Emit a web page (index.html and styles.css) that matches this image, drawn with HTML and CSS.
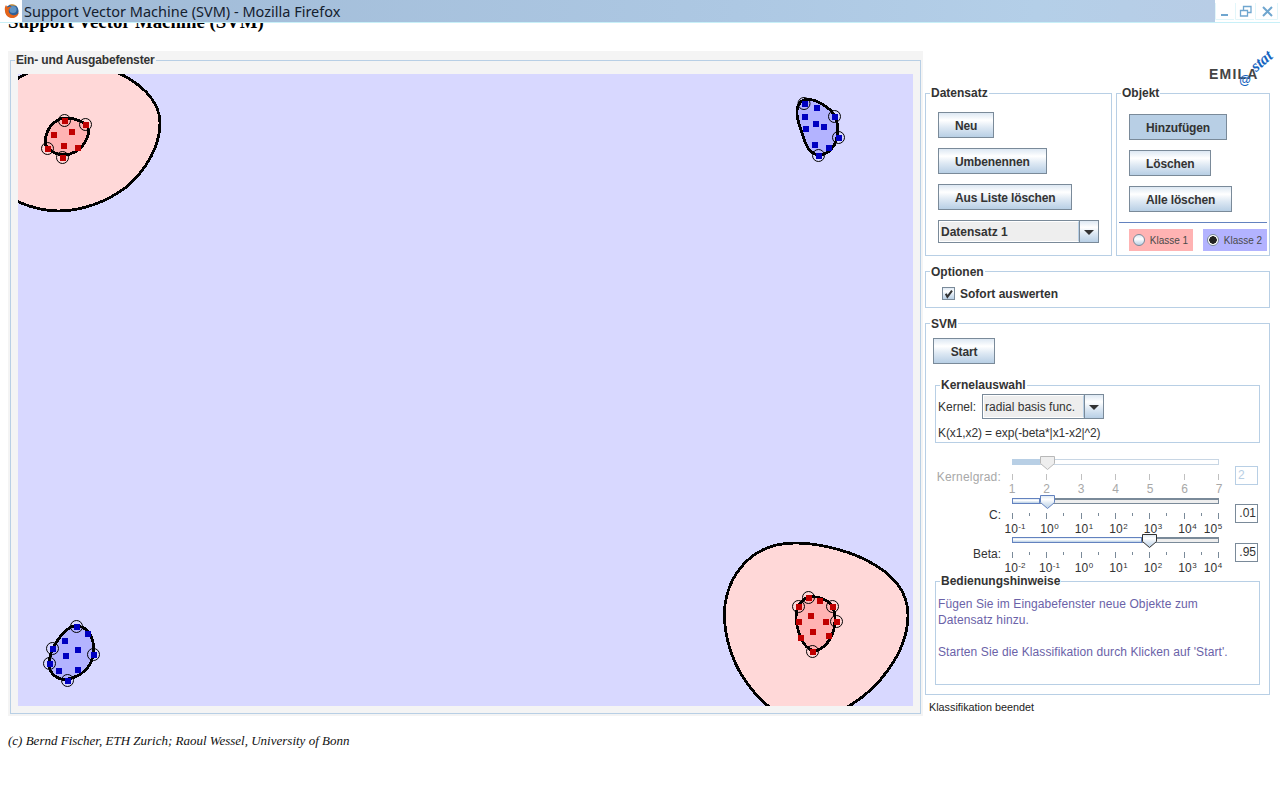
FILE: index.html
```html
<!DOCTYPE html>
<html lang="de">
<head>
    <meta charset="UTF-8">
    <title>Support Vector Machine (SVM) - Mozilla Firefox</title>
    <link rel="stylesheet" href="styles.css">
</head>
<body>

<!-- Browser title bar, lies over the heading -->
<div class="titlebar">
    <svg class="ff-icon" width="22" height="22" viewBox="0 0 22 22">
        <circle cx="12" cy="11" r="6.6" fill="#2f5f96"/>
        <circle cx="13" cy="9.5" r="3.6" fill="#5f93c4"/>
        <path d="M6 5 C4.6 7 4.6 9 5 11 C5.4 15.4 8.6 18 12.4 18 C16 18 18.6 15.4 18.8 12 C17.4 14.6 14.8 15.6 12.4 15 C9.6 14.4 8.2 12 8.8 9.8 C9.2 8.4 10.2 7.6 11.4 7.2 C10 6.4 8.6 6.6 7.6 7.4 C7 6.8 6.4 6 6 5 Z" fill="#e5641a"/>
        <path d="M9 4.8 C11.4 3.6 15 4 17 6.2 C15.4 5.4 13.6 5.2 12 5.8 C11 5.4 10 5 9 4.8 Z" fill="#f0a030"/>
    </svg>
    <div class="titlebar-text">Support Vector Machine (SVM) - Mozilla Firefox</div>
    <div class="win-controls">
        <svg width="64" height="22" viewBox="0 0 64 22" fill="none" stroke="#6fa6cf">
            <path d="M6 15 H13" stroke-width="2"/>
            <path d="M25.5 10.5 H32.5 V16 H25.5 Z M28.5 10 V6.5 H36 V12.5 H33" stroke-width="1.3"/>
            <path d="M48 7 L57 16 M57 7 L48 16" stroke-width="2"/>
            <path d="M.5 3 V19.5 H19 M20.5 3 V19.5 H39 M40.5 3 V19.5 H62.5 V3" stroke="#e2f6fa" stroke-width="1"/>
        </svg>
    </div>
</div>

<h1 class="page-title">Support Vector Machine (SVM)</h1>

<div class="applet">

    <!-- Plot -->
    <div class="left-panel">
        <div class="box plot-box">
            <div class="box-title plot-title">Ein- und Ausgabefenster</div>
            <svg class="plot" width="895" height="632" viewBox="18 74 895 632">
                <rect x="18" y="74" width="895" height="632" fill="#d8d8ff"/>

                <g fill="#ffd8d8" stroke="#000" stroke-width="2.8">
                    <path d="M112 70 C140 82 160 100 160 123 C160 145 147 170 125 188 C105 203 80 211 58 211 C42 211 28 207 10 198 L10 84 C16 79 24 74 36 70 Z"/>
                    <path d="M776 712 C752 695 728 665 724.5 620 C722 585 745 543 795 543 C835 543 908 565 908 615 C908 650 880 692 838 712 Z"/>
                </g>

                <g stroke="#000" stroke-width="2.8">
                    <path fill="#ffb3b3" d="M47 133 C50 124 58 118 66 118 C74 118 86 122 88 128 C90 136 84 147 75 152 C68 156 57 156 50 150 C44 146 44 140 47 133 Z"/>
                    <path fill="#ffb3b3" d="M796 618 C796 608 801 598 811 596.7 C820 596 829 601 832 606 C836 613 836 625 833 632 C830 642 823 649 815 651 C808 650 803 644 800 636 C798 630 796 624 796 618 Z"/>
                    <path fill="#b3b3ff" d="M797 110 C798 102 803 99 810 99.5 C820 101 831 109 835 116 C838 122 838 132 836.5 140 C834 148 828 154 820 155 C813 155 808 150 805 142 C802 132 796 120 797 110 Z"/>
                    <path fill="#b3b3ff" d="M49 664 C49 652 59 634 71 627 C79 624 86 628 90 634 C95 643 95 655 90 664 C85 673 74 679 65 679.5 C56 679 49 673 49 664 Z"/>
                </g>

                <!-- class 1 objects -->
                <g class="points" fill="#c00000">
                    <rect x="62" y="118" width="5" height="5"/><rect x="83" y="122" width="5" height="5"/>
                    <rect x="69" y="129" width="5" height="5"/><rect x="51" y="132" width="5" height="5"/>
                    <rect x="61" y="143" width="5" height="5"/><rect x="75" y="145" width="5" height="5"/>
                    <rect x="45" y="146" width="5" height="5"/><rect x="60" y="155" width="5" height="5"/>

                    <rect x="806" y="595" width="5" height="5"/><rect x="817" y="598" width="5" height="5"/>
                    <rect x="796" y="604" width="5" height="5"/><rect x="830" y="604" width="5" height="5"/>
                    <rect x="808" y="613" width="5" height="5"/><rect x="796" y="619" width="5" height="5"/>
                    <rect x="823" y="619" width="5" height="5"/><rect x="834" y="619" width="5" height="5"/>
                    <rect x="810" y="629" width="5" height="5"/><rect x="798" y="635" width="5" height="5"/>
                    <rect x="826" y="633" width="5" height="5"/><rect x="810" y="649" width="5" height="5"/>
                </g>

                <!-- class 2 objects -->
                <g class="points" fill="#0000c0">
                    <rect x="802" y="101" width="5" height="5"/><rect x="814" y="105" width="5" height="5"/>
                    <rect x="832" y="114" width="5" height="5"/><rect x="802" y="114" width="5" height="5"/>
                    <rect x="813" y="121" width="5" height="5"/><rect x="821" y="124" width="5" height="5"/>
                    <rect x="803" y="126" width="5" height="5"/><rect x="836" y="135" width="5" height="5"/>
                    <rect x="812" y="142" width="5" height="5"/><rect x="826" y="145" width="5" height="5"/>
                    <rect x="816" y="153" width="5" height="5"/>

                    <rect x="74" y="624" width="5" height="5"/><rect x="85" y="631" width="5" height="5"/>
                    <rect x="62" y="638" width="5" height="5"/><rect x="50" y="646" width="5" height="5"/>
                    <rect x="75" y="647" width="5" height="5"/><rect x="91" y="652" width="5" height="5"/>
                    <rect x="63" y="653" width="5" height="5"/><rect x="47" y="661" width="5" height="5"/>
                    <rect x="56" y="668" width="5" height="5"/><rect x="75" y="667" width="5" height="5"/>
                    <rect x="65" y="678" width="5" height="5"/>
                </g>

                <!-- support vectors -->
                <g fill="none" stroke="#000" stroke-width="1">
                    <circle cx="64.5" cy="120.5" r="6"/><circle cx="85.5" cy="124.5" r="6"/>
                    <circle cx="47.5" cy="148.5" r="6"/><circle cx="62.5" cy="157.5" r="6"/>
                    <circle cx="804" cy="103.5" r="6"/><circle cx="834.5" cy="116.5" r="6"/>
                    <circle cx="838.5" cy="137.5" r="6"/><circle cx="818.5" cy="155.5" r="6"/>
                    <circle cx="808.5" cy="597.5" r="6"/><circle cx="798.5" cy="606.5" r="6"/>
                    <circle cx="832.5" cy="606.5" r="6"/><circle cx="836.5" cy="621.5" r="6"/>
                    <circle cx="812.5" cy="651.5" r="6"/>
                    <circle cx="76.5" cy="626.5" r="6"/><circle cx="52.5" cy="648.5" r="6"/>
                    <circle cx="93.5" cy="654.5" r="6"/><circle cx="49.5" cy="663.5" r="6"/>
                    <circle cx="67.5" cy="680.5" r="6"/>
                </g>
            </svg>
        </div>
    </div>

    <!-- Controls -->
    <div class="right-panel">
        <div class="logo-row">
            <div class="logo">EMILA<span class="logo-at">@</span><span class="logo-stat">stat</span></div>
        </div>

        <div class="top-row">
            <div class="box dataset-box">
                <div class="box-title">Datensatz</div>
                <button class="btn">Neu</button>
                <button class="btn">Umbenennen</button>
                <button class="btn">Aus Liste löschen</button>
                <div class="combo dataset-combo">
                    <span class="combo-value">Datensatz 1</span>
                    <span class="combo-arrow"></span>
                </div>
            </div>

            <div class="box object-box">
                <div class="box-title">Objekt</div>
                <button class="btn btn-active">Hinzufügen</button>
                <button class="btn">Löschen</button>
                <button class="btn">Alle löschen</button>
                <div class="divider"></div>
                <div class="class-row">
                    <label class="class-opt class-one"><input type="radio" name="klasse"> Klasse 1</label>
                    <label class="class-opt class-two"><input type="radio" name="klasse" checked> Klasse 2</label>
                </div>
            </div>
        </div>

        <div class="box options-box">
            <div class="box-title low-title">Optionen</div>
            <label class="check">
                <span class="check-mark">
                    <svg width="11" height="11" viewBox="0 0 11 11"><path d="M2.8 5.8 L4.4 8.8 L9 2.6" fill="none" stroke="#333" stroke-width="2"/></svg>
                </span>
                Sofort auswerten
            </label>
        </div>

        <div class="box svm-box">
            <div class="box-title low-title">SVM</div>
            <button class="btn start-btn">Start</button>

            <div class="box kernel-box">
                <div class="box-title">Kernelauswahl</div>
                <div class="kernel-line">
                    <span>Kernel:</span>
                    <div class="combo kernel-combo">
                        <span class="combo-value">radial basis func.</span>
                        <span class="combo-arrow"></span>
                    </div>
                </div>
                <div class="formula">K(x1,x2) = exp(-beta*|x1-x2|^2)</div>
            </div>

            <svg class="defs" width="0" height="0">
                <linearGradient id="thumbFill" x1="0" y1="0" x2="0" y2="1">
                    <stop offset="0" stop-color="#dde8f3"/>
                    <stop offset=".3" stop-color="#fff"/>
                    <stop offset=".6" stop-color="#dde8f3"/>
                    <stop offset="1" stop-color="#b8cfe5"/>
                </linearGradient>
            </svg>

            <!-- Kernelgrad (disabled) -->
            <div class="slider-row is-disabled first-row">
                <div class="slider-label">Kernelgrad:</div>
                <div class="slider">
                    <div class="track"><div class="track-fill" style="width:28px"></div></div>
                    <svg class="thumb" style="left:28px" width="15" height="14" viewBox="0 0 15 14"><path d="M.5.5 H14.5 V7.5 L7.5 13.5 L.5 7.5 Z" fill="#eee" stroke="#b8b8b8"/></svg>
                    <div class="ticks"><i></i><i></i><i></i><i></i><i></i><i></i><i></i></div>
                    <div class="scale">
                        <span>1</span><span>2</span><span>3</span><span>4</span><span>5</span><span>6</span><span>7</span>
                    </div>
                </div>
                <div class="num-field">2</div>
            </div>

            <!-- C -->
            <div class="slider-row">
                <div class="slider-label">C:</div>
                <div class="slider">
                    <div class="track"><div class="track-fill" style="width:28px"></div></div>
                    <svg class="thumb" style="left:28px" width="15" height="14" viewBox="0 0 15 14"><path d="M.5.5 H14.5 V7.5 L7.5 13.5 L.5 7.5 Z" fill="url(#thumbFill)" stroke="#6382bf"/></svg>
                    <div class="ticks"><i></i><b></b><i></i><b></b><i></i><b></b><i></i><b></b><i></i><b></b><i></i><b></b><i></i></div>
                    <div class="scale scale-pow">
                        <span>10<sup>-1</sup></span><span>10<sup>0</sup></span><span>10<sup>1</sup></span><span>10<sup>2</sup></span><span>10<sup>3</sup></span><span>10<sup>4</sup></span><span class="scale-end">10<sup>5</sup></span>
                    </div>
                </div>
                <div class="num-field">.01</div>
            </div>

            <!-- Beta -->
            <div class="slider-row">
                <div class="slider-label">Beta:</div>
                <div class="slider">
                    <div class="track"><div class="track-fill" style="width:130px"></div></div>
                    <svg class="thumb" style="left:130px" width="15" height="14" viewBox="0 0 15 14"><path d="M.5.5 H14.5 V7.5 L7.5 13.5 L.5 7.5 Z" fill="url(#thumbFill)" stroke="#333"/></svg>
                    <div class="ticks"><i></i><b></b><i></i><b></b><i></i><b></b><i></i><b></b><i></i><b></b><i></i><b></b><i></i></div>
                    <div class="scale scale-pow">
                        <span>10<sup>-2</sup></span><span>10<sup>-1</sup></span><span>10<sup>0</sup></span><span>10<sup>1</sup></span><span>10<sup>2</sup></span><span>10<sup>3</sup></span><span class="scale-end">10<sup>4</sup></span>
                    </div>
                </div>
                <div class="num-field">.95</div>
            </div>

            <div class="box hint-box">
                <div class="box-title">Bedienungshinweise</div>
                <p>Fügen Sie im Eingabefenster neue Objekte zum<br>Datensatz hinzu.</p>
                <p>Starten Sie die Klassifikation durch Klicken auf 'Start'.</p>
            </div>
        </div>

        <div class="status">Klassifikation beendet</div>
    </div>
</div>

<p class="credits">(c) Bernd Fischer, ETH Zurich; Raoul Wessel, University of Bonn</p>

</body>
</html>
```

FILE: styles.css
```css
* {
    box-sizing: border-box;
}
body {
    margin: 0;
    padding: 0 8px;
    background: #fff;
    color: #333;
    font-family: "Liberation Sans", Arial, sans-serif;
    font-size: 12px;
    overflow: hidden;
}

/* title bar */
.titlebar {
    position: absolute;
    top: 0;
    left: 0;
    width: 100%;
    height: 23px;
    display: flex;
    background: #fff;
    border-bottom: 1px solid #c8f0f8;
}
.ff-icon {
    flex: none;
}
.titlebar-text {
    flex: 1;
    padding-left: 2px;
    background: linear-gradient(90deg, #a0bad6, #adc8e3 60%, #b4cfe8 85%, #b8cde6);
    color: #14202e;
    font-family: "Noto Sans", sans-serif;
    font-size: 14.5px;
    line-height: 22px;
}
.win-controls {
    flex: none;
    width: 65px;
    background: #fff;
}

.page-title {
    margin: 12px 0 19px;
    color: #000;
    font-family: "Liberation Serif", "Times New Roman", serif;
    font-size: 18.8px;
    font-weight: bold;
    line-height: 20px;
}

/* applet */
.applet {
    display: flex;
    gap: 2px;
}
.left-panel {
    flex: none;
    width: 915px;
    height: 665px;
    padding: 9px 2px 2px;
    background: #f4f4f4;
}
.right-panel {
    flex: none;
    width: 345px;
}

.box {
    position: relative;
    border: 1px solid #b8cfe5;
}
.box-title {
    position: absolute;
    top: -8px;
    left: 4px;
    padding: 0 1px;
    background: #fff;
    font-weight: bold;
    line-height: 14px;
    white-space: nowrap;
}
.low-title {
    top: -7px;
}

.plot-box {
    height: 654px;
    padding: 13px 0 0 7px;
}
.plot-title {
    background: #f4f4f4;
    letter-spacing: -.13px;
}
.plot {
    display: block;
}
.plot g, .plot rect {
    shape-rendering: crispEdges;
}
.plot circle {
    shape-rendering: auto;
}
.points rect {
    width: 6px;
    height: 6px;
}

/* logo */
.logo-row {
    height: 42px;
    display: flex;
    justify-content: flex-end;
}
.logo {
    position: relative;
    width: 61px;
    margin: 16px 0 0;
    color: #444;
    font-size: 14px;
    font-weight: bold;
    line-height: 14px;
    white-space: nowrap;
    letter-spacing: 1.2px;
}
.logo-at {
    position: absolute;
    top: 6px;
    left: 30px;
    color: #1464c0;
    font-size: 12px;
    font-style: italic;
    letter-spacing: 0;
}
.logo-stat {
    position: absolute;
    top: -13px;
    left: 41px;
    color: #1464c0;
    font-family: "Liberation Serif", serif;
    font-size: 16px;
    font-style: italic;
    font-weight: bold;
    letter-spacing: 0;
    transform: rotate(-40deg);
}

/* buttons and combos */
.btn {
    display: block;
    height: 26px;
    padding: 1px 16px 0;
    border: 1px solid #7a8a99;
    background: linear-gradient(#dde8f3, #fff 30%, #dde8f3 60%, #b8cfe5);
    color: #333;
    font-family: inherit;
    font-size: 12px;
    font-weight: bold;
    letter-spacing: -.13px;
    white-space: nowrap;
}
.btn-active {
    background: #b8cfe5;
}
.combo {
    display: flex;
    border: 1px solid #7a8a99;
}
.combo-value {
    flex: 1;
    padding-left: 1px;
    background: #eee;
    border: 1px solid #fff;
    border-right-color: #b8cfe5;
    white-space: nowrap;
}
.combo-arrow {
    position: relative;
    flex: none;
    width: 19px;
    border-left: 1px solid #7a8a99;
    background: linear-gradient(#dde8f3, #fff 30%, #dde8f3 60%, #b8cfe5);
}
.combo-arrow::after {
    content: "";
    position: absolute;
    top: 50%;
    left: 4px;
    margin-top: -2px;
    border: 5px solid transparent;
    border-top-color: #333;
    border-bottom: 0;
}

/* dataset and object */
.top-row {
    display: flex;
    gap: 4px;
}
.dataset-box {
    width: 187px;
    height: 163px;
    padding: 18px 0 0 12px;
}
.dataset-box .btn {
    margin-bottom: 10px;
}
.dataset-combo {
    width: 161px;
    height: 23px;
    font-weight: bold;
    line-height: 21px;
}
.object-box {
    width: 154px;
    height: 163px;
    padding: 20px 0 0 12px;
}
.object-box .btn {
    margin-bottom: 10px;
}
.divider {
    width: 148px;
    height: 1px;
    margin-left: -10px;
    background: #6382bf;
}
.class-row {
    display: flex;
    gap: 10px;
    margin-top: 6px;
}
.class-opt {
    display: flex;
    align-items: center;
    gap: 2px;
    width: 64px;
    height: 22px;
    padding-left: 4px;
    color: #4a4a4a;
    font-size: 10px;
    white-space: pre;
}
.class-one {
    background: #ffb3b3;
}
.class-two {
    background: #b3b3ff;
}
.class-opt input {
    appearance: none;
    flex: none;
    width: 12px;
    height: 12px;
    margin: 0;
    border: 1px solid #7a8a99;
    border-radius: 50%;
    background: linear-gradient(#dde8f3, #fff 40%, #b8cfe5);
}
.class-opt input:checked {
    background: radial-gradient(circle, #222 0, #222 3.5px, #fff 4px);
}

/* options */
.options-box {
    height: 37px;
    margin-top: 15px;
    padding: 15px 0 0 16px;
}
.check {
    display: flex;
    align-items: center;
    gap: 5px;
    height: 13px;
    font-weight: bold;
}
.check-mark {
    flex: none;
    width: 13px;
    height: 13px;
    border: 1px solid #7a8a99;
    background: linear-gradient(#dde8f3, #fff 30%, #dde8f3 60%, #b8cfe5);
}
.check-mark svg {
    display: block;
}

/* svm */
.svm-box {
    height: 372px;
    margin-top: 15px;
    padding-top: 14px;
}
.start-btn {
    width: 62px;
    margin-left: 7px;
}
.kernel-box {
    height: 58px;
    margin: 21px 9px 0;
    padding: 8px 0 0 2px;
}
.kernel-line {
    display: flex;
    align-items: center;
    gap: 6px;
}
.kernel-combo {
    width: 122px;
    height: 25px;
    line-height: 23px;
}
.formula {
    margin-top: 7px;
    letter-spacing: -.1px;
    line-height: 14px;
}

.defs {
    position: absolute;
}

/* sliders */
.slider-row {
    display: grid;
    grid-template-columns: 75px 207px 23px;
    column-gap: 11px;
    height: 39px;
}
.first-row {
    margin-top: 13px;
}
.slider-label {
    margin-top: 13px;
    line-height: 14px;
    text-align: right;
}
.slider {
    position: relative;
    height: 39px;
}
.track {
    height: 6px;
    margin-top: 3px;
    border: 1px solid #7a8a99;
    border-top-width: 2px;
    background: #eee;
}
.track-fill {
    height: 6px;
    margin: -2px 0 0 -1px;
    border: 1px solid #6382bf;
    background: linear-gradient(#dde8f3, #fff 40%, #b8cfe5);
}
.thumb {
    position: absolute;
    top: 0;
}
.ticks {
    display: flex;
    justify-content: space-between;
    margin-top: 9px;
    height: 6px;
}
.ticks i, .ticks b {
    display: block;
    width: 1px;
    background: #7a8a99;
}
.ticks i {
    height: 6px;
}
.ticks b {
    height: 3px;
}
.scale {
    display: flex;
    margin: 2px -17.25px 0;
    line-height: 14px;
    white-space: nowrap;
}
.scale span {
    flex: 1;
    text-align: center;
}
.scale-pow {
    margin-top: 3px;
    transform: translateX(3px);
}
.scale .scale-end {
    position: relative;
    left: -9px;
}
.scale sup {
    margin-left: .5px;
    font-size: 8px;
    line-height: 0;
    vertical-align: 4px;
}
.num-field {
    width: 23px;
    height: 19px;
    margin: 9px 0 0 5px;
    padding-right: 1px;
    border: 1px solid #7a8a99;
    background: #fff;
    line-height: 17px;
    text-align: right;
}

.is-disabled .slider-label, .is-disabled .scale {
    color: #a8a8a8;
}
.is-disabled .slider-label {
    margin-top: 14px;
    letter-spacing: .2px;
}
.is-disabled .track {
    border-color: #c8d6e4;
    border-top-width: 1px;
    background: #fff;
}
.is-disabled .track-fill {
    margin-top: -1px;
    border-color: #b8cfe5;
    background: #b8cfe5;
}
.is-disabled .ticks i {
    background: #c0c0c0;
}
.is-disabled .num-field {
    margin-top: 10px;
    padding: 0 0 0 2px;
    border-color: #b8cfe5;
    color: #b8cfe5;
    text-align: left;
}

.hint-box {
    height: 104px;
    margin: 8px 9px 0;
    padding: 14px 0 0 2px;
    color: #6a62a8;
    letter-spacing: .1px;
    line-height: 16px;
}
.hint-box .box-title {
    color: #333;
    letter-spacing: 0;
}
.hint-box p {
    margin: 0 0 16px;
}

.status {
    margin-top: 6px;
    padding-left: 4px;
    color: #222;
    font-size: 10.8px;
    line-height: 12px;
}

.credits {
    margin: 18px 0 0;
    color: #111;
    font-family: "Liberation Serif", "Times New Roman", serif;
    font-size: 13px;
    font-style: italic;
    line-height: 14px;
}
```
